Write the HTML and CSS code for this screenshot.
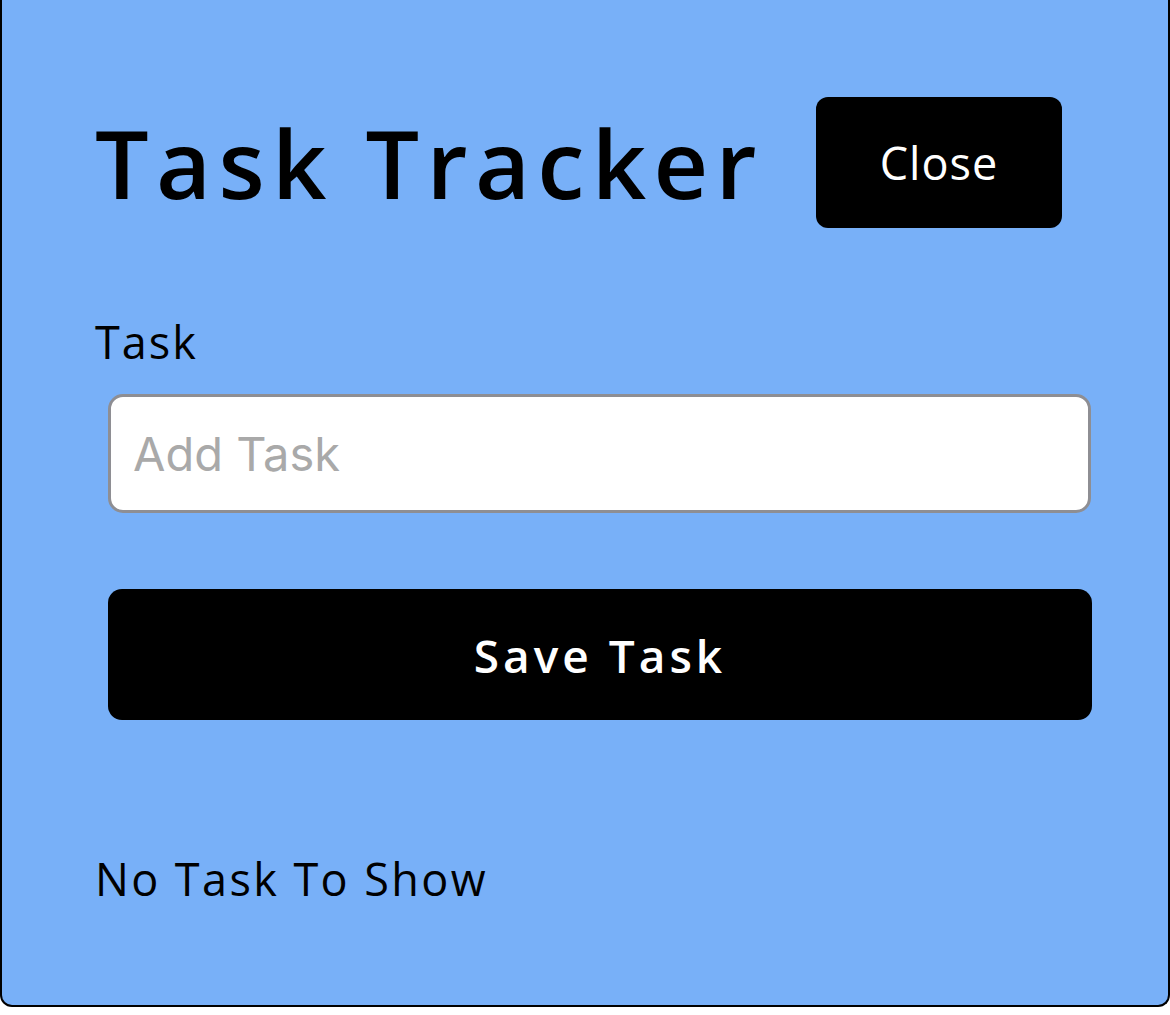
FILE: index.html
```html
<!DOCTYPE html>
<html lang="en">
<head>
<meta charset="utf-8">
<title>Task Tracker</title>
<link rel="stylesheet" href="styles.css">
</head>
<body>
<div class="container">
  <header class="header">
    <h1 class="title">Task Tracker</h1>
    <button class="btn btn-close">Close</button>
  </header>
  <form class="add-form">
    <div class="form-control">
      <label class="label">Task</label>
      <input class="input" type="text" placeholder="Add Task">
    </div>
    <button type="button" class="btn btn-save">Save Task</button>
  </form>
  <p class="empty">No Task To Show</p>
</div>
</body>
</html>
```
FILE: styles.css
```css
* { box-sizing: border-box; }
html, body { margin: 0; padding: 0; background: #ffffff; }
body { font-family: "Open Sans", "Noto Sans", sans-serif; }
.container {
  width: 1170px;
  height: 1007px;
  background: #78b0f8;
  border: 2px solid #000;
  border-top: 0;
  border-radius: 0 0 12px 12px;
  padding: 0 106px 0 93px;
}
.header {
  display: flex;
  align-items: center;
  justify-content: space-between;
  padding-top: 97px;
}
.title {
  margin: 0;
  font-size: 95px;
  font-weight: 600;
  letter-spacing: 7.3px;
  line-height: 131px;
}
.btn {
  background: #000;
  color: #fff;
  border: 0;
  font-family: inherit;
  cursor: pointer;
}
.btn-close {
  width: 246px;
  height: 131px;
  border-radius: 12px;
  font-size: 45px;
  font-weight: 400;
  letter-spacing: 1px;
}
.add-form { margin-top: 88px; }
.form-control { display: flex; flex-direction: column; }
.label {
  font-size: 45px;
  line-height: 52px;
  margin-bottom: 26px;
  letter-spacing: 2px;
}
.input {
  margin-left: 13px;
  width: 983px;
  height: 119px;
  border: 3px solid #8e8e93;
  border-radius: 15px;
  background: #fff;
  padding: 0 22px;
  font-family: Inter, "Liberation Sans", sans-serif;
  font-size: 47px;
  color: #000;
}
.input::placeholder { color: #a9a9a9; }
.btn-save {
  display: block;
  margin: 76px 0 0 13px;
  width: 984px;
  height: 131px;
  border-radius: 14px;
  font-size: 46px;
  font-weight: 600;
  letter-spacing: 4px;
}
.empty {
  margin: 133px 0 0 0;
  font-size: 45px;
  line-height: 52px;
  letter-spacing: 2.4px;
}
```
